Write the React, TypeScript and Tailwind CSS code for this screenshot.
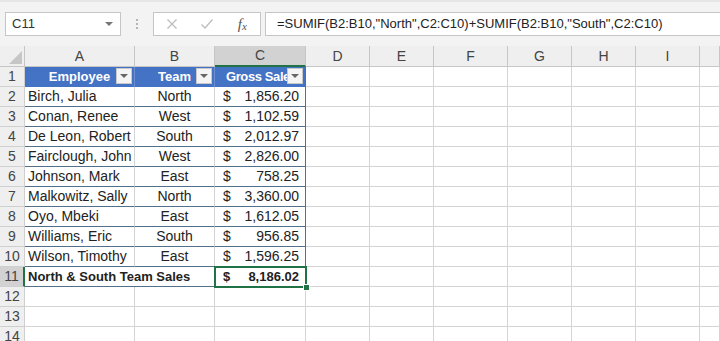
import React from "react";

const data: [string, string, string][] = [
  ["Birch, Julia", "North", "1,856.20"],
  ["Conan, Renee", "West", "1,102.59"],
  ["De Leon, Robert", "South", "2,012.97"],
  ["Fairclough, John", "West", "2,826.00"],
  ["Johnson, Mark", "East", "758.25"],
  ["Malkowitz, Sally", "North", "3,360.00"],
  ["Oyo, Mbeki", "East", "1,612.05"],
  ["Williams, Eric", "South", "956.85"],
  ["Wilson, Timothy", "East", "1,596.25"],
];

const emptyCell = "border-r border-b border-[#d4d4d4]";
const rowHead =
  "flex items-center justify-center bg-[#efefef] border-r border-b border-[#cfcfcf] text-[14px] text-[#444]";

function Empties({ n }: { n: number }) {
  return (
    <>
      {Array.from({ length: 7 }).map((_, i) => (
        <div key={`e-${n}-${i}`} className={emptyCell} />
      ))}
    </>
  );
}

function FilterBtn() {
  return (
    <div className="absolute right-[2px] top-[1px] w-[16px] h-[16px] bg-[#f4f4f4] border border-[#c8c8c8] flex items-center justify-center">
      <div className="w-0 h-0 border-l-[4px] border-r-[4px] border-t-[4px] border-l-transparent border-r-transparent border-t-[#666]" />
    </div>
  );
}

export default function App() {
  const letters = ["A", "B", "C", "D", "E", "F", "G", "H", "I", ""];
  return (
    <div className="w-[720px] h-[341px] overflow-hidden bg-white font-['Liberation_Sans',Arial,sans-serif] text-[#222]">
      {/* Toolbar */}
      <div className="h-[46px] bg-[#f3f3f3] border-t-[2px] border-[#e6e6e6] flex items-start pt-[10px]">
        <div className="ml-[5px] w-[116px] h-[24px] bg-white border border-[#c6c6c6] flex items-center justify-between pl-[6px] pr-[7px]">
          <span className="text-[13px] text-[#333]">C11</span>
          <div className="w-0 h-0 border-l-[4px] border-r-[4px] border-t-[4px] border-l-transparent border-r-transparent border-t-[#777]" />
        </div>
        <div className="w-[32px] h-[24px] flex flex-col items-center justify-center gap-[2px]">
          <div className="w-[2px] h-[2px] bg-[#b5b5b5]" />
          <div className="w-[2px] h-[2px] bg-[#b5b5b5]" />
          <div className="w-[2px] h-[2px] bg-[#b5b5b5]" />
        </div>
        <div className="w-[108px] h-[24px] bg-white border border-[#c6c6c6] flex items-center">
          <div className="w-[36px] flex justify-center">
            <svg width="12" height="12" viewBox="0 0 12 12">
              <path d="M1.5 1.5 L10.5 10.5 M10.5 1.5 L1.5 10.5" stroke="#bdbdbd" strokeWidth="1.3" fill="none" />
            </svg>
          </div>
          <div className="w-[36px] flex justify-center">
            <svg width="14" height="12" viewBox="0 0 14 12">
              <path d="M1.5 6.5 L5 10 L12.5 1.5" stroke="#bdbdbd" strokeWidth="1.3" fill="none" />
            </svg>
          </div>
          <div className="w-[36px] flex justify-center items-end font-['Liberation_Serif',serif] italic text-[#555]">
            <span className="text-[15px] leading-none">f</span>
            <span className="text-[11px] leading-none">x</span>
          </div>
        </div>
        <div className="ml-[4px] flex-1 h-[24px] bg-white border-l border-t border-b border-[#c6c6c6] flex items-center pl-[11px]">
          <span className="text-[13px] text-[#222] whitespace-nowrap">
            =SUMIF(B2:B10,"North",C2:C10)+SUMIF(B2:B10,"South",C2:C10)
          </span>
        </div>
      </div>

      {/* Grid */}
      <div className="grid grid-cols-[25px_110px_80px_91px_64px_64px_74px_64px_64px_64px_20px] grid-rows-[21px_repeat(14,20px)]">
        {/* Column headers */}
        <div className="relative bg-[#efefef] border-r border-b border-[#c6c6c6]">
          <svg className="absolute left-[9px] top-[5px]" width="13" height="13" viewBox="0 0 13 13">
            <path d="M13 0 L13 13 L0 13 Z" fill="#c6c6c6" />
          </svg>
        </div>
        {letters.map((l, i) =>
          l === "C" ? (
            <div
              key={`h-${i}`}
              className="flex items-center justify-center bg-[#d2d2d2] border-r border-[#c6c6c6] border-b-[2px] border-b-[#217346] text-[14px] text-[#444]"
            >
              {l}
            </div>
          ) : (
            <div
              key={`h-${i}`}
              className="flex items-center justify-center bg-[#efefef] border-r border-b border-[#c6c6c6] text-[14px] text-[#444]"
            >
              {l}
            </div>
          )
        )}

        {/* Row 1: table header */}
        <div className={rowHead}>1</div>
        <div className="relative flex items-center justify-center bg-[#4472c4] border-r border-[#6d8fce] text-white font-bold text-[13px]">
          Employee
          <FilterBtn />
        </div>
        <div className="relative flex items-center justify-center bg-[#4472c4] border-r border-[#6d8fce] text-white font-bold text-[13px]">
          Team
          <FilterBtn />
        </div>
        <div className="relative flex items-center justify-start pl-[11px] overflow-hidden whitespace-nowrap bg-[#4472c4] border-r border-[#52708a] text-white font-bold text-[13px] tracking-[-0.4px]">
          Gross Sales
          <FilterBtn />
        </div>
        <Empties n={1} />

        {/* Data rows */}
        {data.map(([name, team, amt], i) => (
          <React.Fragment key={`r-${i}`}>
            <div className={rowHead}>{i + 2}</div>
            <div className="flex items-center pl-[3px] border-r border-[#d4d4d4] border-b border-b-[#52708a] text-[14px] whitespace-nowrap">
              {name}
            </div>
            <div className="flex items-center justify-center border-r border-[#d4d4d4] border-b border-b-[#52708a] text-[14px]">
              {team}
            </div>
            <div className="flex items-center justify-between pl-[8px] pr-[6px] border-r border-b border-[#52708a] text-[14px]">
              <span>$</span>
              <span>{amt}</span>
            </div>
            <Empties n={i + 2} />
          </React.Fragment>
        ))}

        {/* Row 11: total */}
        <div className="flex items-center justify-center bg-[#d2d2d2] border-b border-[#cfcfcf] border-r-[2px] border-r-[#217346] text-[14px] text-[#444]">
          11
        </div>
        <div className="relative z-10 flex items-center pl-[3px] border-b border-[#52708a] font-bold text-[13px] whitespace-nowrap">
          North &amp; South Team Sales
        </div>
        <div className="border-b border-[#52708a]" />
        <div className="relative flex items-center justify-between pl-[8px] pr-[6px] border-r border-b border-[#52708a] font-bold text-[13px]">
          <span>$</span>
          <span>8,186.02</span>
          <div className="absolute left-[-1px] top-[-1px] right-[-2px] bottom-[-2px] border-2 border-[#217346]" />
          <div className="absolute right-[-5px] bottom-[-5px] w-[7px] h-[7px] bg-[#217346] border border-white" />
        </div>
        <Empties n={11} />

        {/* Rows 12-14 */}
        {[12, 13, 14].map((n) => (
          <React.Fragment key={`x-${n}`}>
            <div className={rowHead}>{n}</div>
            <div className={emptyCell} />
            <div className={emptyCell} />
            <div className={emptyCell} />
            <Empties n={n} />
          </React.Fragment>
        ))}
      </div>
    </div>
  );
}
